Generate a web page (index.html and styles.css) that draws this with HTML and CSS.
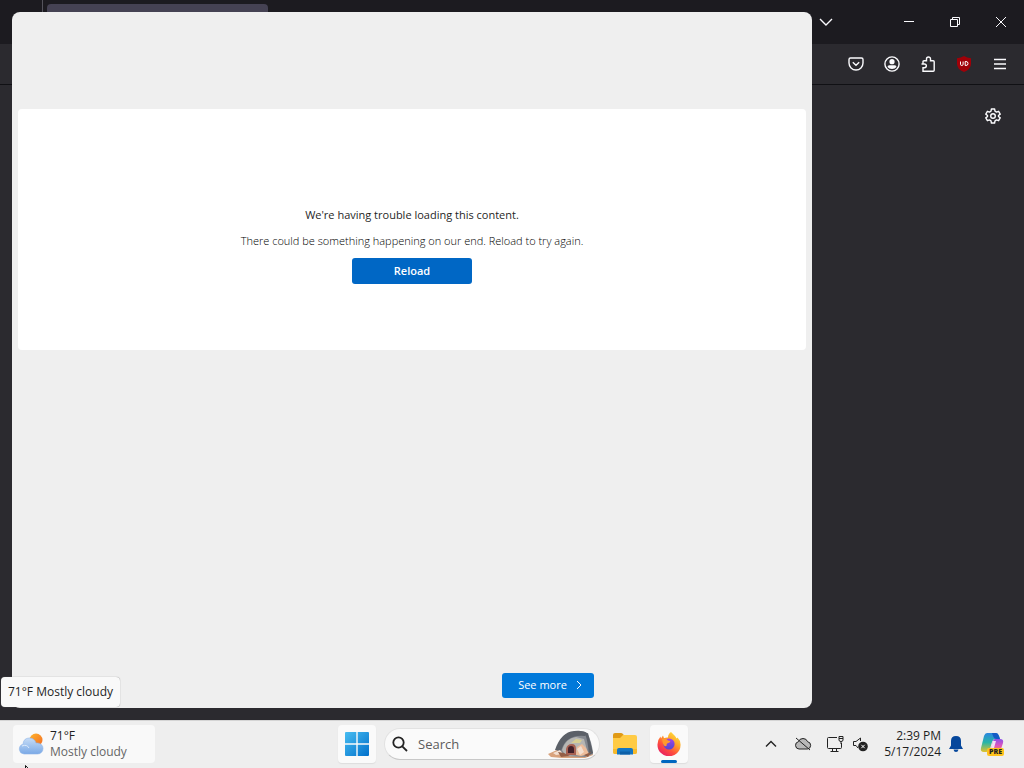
FILE: index.html
```html
<!DOCTYPE html>
<html lang="en">
<head>
    <meta charset="UTF-8">
    <meta name="viewport" content="width=device-width, initial-scale=1.0">
    <title>Desktop</title>
    <link rel="stylesheet" href="styles.css">
</head>
<body>
    <div class="desktop">
        <!-- Browser window -->
        <section class="browser">
            <header class="tab-strip">
                <div class="pinned"></div>
                <div class="tab"></div>
                <div class="window-controls">
                    <button class="list-tabs" aria-label="List all tabs">
                        <svg width="16" height="16" viewBox="0 0 16 16"><path class="thick" d="M2 5l6 6 6-6"/></svg>
                    </button>
                    <button aria-label="Minimize">
                        <svg width="12" height="12" viewBox="0 0 12 12"><path d="M1 5.5h10"/></svg>
                    </button>
                    <button aria-label="Restore">
                        <svg width="12" height="12" viewBox="0 0 12 12"><path d="M1.500 3.500h7v7h-7zM3.500 3V1.500h7v7H9"/></svg>
                    </button>
                    <button aria-label="Close">
                        <svg width="12" height="12" viewBox="0 0 12 12"><path d="M1 1l10 10M11 1L1 11"/></svg>
                    </button>
                </div>
            </header>
            <nav class="toolbar">
                <button aria-label="Save to Pocket">
                    <svg width="16" height="16" viewBox="0 0 16 16"><path class="thick" d="M2.500 2h11q1.500 0 1.500 1.500V7a7 7 0 0 1-14 0V3.500Q1 2 2.500 2zM4.800 6.200L8 9.200l3.200-3"/></svg>
                </button>
                <button aria-label="Account">
                    <svg width="16" height="16" viewBox="0 0 16 16"><circle class="thick" cx="8" cy="8" r="7.100"/><circle class="solid" cx="8" cy="5.700" r="2.600"/><path class="solid" d="M3.500 11q0-1.800 1.800-1.800h5.400q1.800 0 1.800 1.800Q11 13 8 13t-4.500-2z"/></svg>
                </button>
                <button aria-label="Extensions">
                    <svg width="16" height="16" viewBox="0 0 16 16"><path class="thick" d="M3 15.200h10.200q1 0 1-1V5.800q0-1-1-1h-2.700V3a2 2 0 0 0-4 0v1.800H4q-1 0-1 1V8h1.500a1.800 1.800 0 0 1 0 3.700H3zM3 8H1.500"/></svg>
                </button>
                <button aria-label="uBlock Origin">
                    <svg width="16" height="16" viewBox="0 0 16 16"><path fill="#a00008" stroke="none" d="M8 0q3 2 7 2.200V8q0 5-7 8-7-3-7-8V2.200Q5 2 8 0z"/><path stroke="#fff" d="M4.500 5.500v2.800q0 1.200 1.300 1.200t1.300-1.200V5.500M9.200 5.500v4h.8q2 0 2-2t-2-2z"/></svg>
                </button>
                <button aria-label="Menu">
                    <svg width="16" height="16" viewBox="0 0 16 16"><path class="thick" d="M2 3.500h12M2 8h12M2 12.500h12"/></svg>
                </button>
            </nav>
            <main class="new-tab">
                <button aria-label="Personalize new tab">
                    <svg width="16" height="16" viewBox="0 0 16 16"><path class="thick" stroke-linejoin="round" d="M6.400 1h3.200l.4 2.200 1.500.9 2.100-.8 1.600 2.800L13.500 7.500v1l1.700 1.400-1.600 2.800-2.100-.8-1.500.9L9.600 15H6.400L6 12.800l-1.500-.9-2.100.8L.8 9.900l1.700-1.400v-1L.8 6.100l1.600-2.800 2.100.8L6 3.200z"/><circle class="thick" cx="8" cy="8" r="2.300"/></svg>
                </button>
            </main>
        </section>

        <!-- Widgets board -->
        <section class="widgets">
            <div class="error-card">
                <h1>We're having trouble loading this content.</h1>
                <p>There could be something happening on our end. Reload to try again.</p>
                <button class="reload">Reload</button>
            </div>
            <div class="widgets-footer">
                <button class="see-more">See more
                    <svg width="8" height="10" viewBox="0 0 8 10"><path d="M2 1l4 4-4 4"/></svg>
                </button>
            </div>
        </section>

        <div class="tooltip" role="tooltip">71°F Mostly cloudy</div>

        <!-- Taskbar -->
        <footer class="taskbar">
            <button class="weather">
                <svg width="26" height="24" viewBox="0 0 26 24">
                    <defs>
                        <linearGradient id="cloud" x1="0" y1="0" x2="0" y2="1"><stop offset="0" stop-color="#c6dcf6"/><stop offset="1" stop-color="#7aa9e6"/></linearGradient>
                        <linearGradient id="sun" x1="0" y1="0" x2="1" y2="1"><stop offset="0" stop-color="#ffb52b"/><stop offset="1" stop-color="#f26a24"/></linearGradient>
                    </defs>
                    <circle cx="18" cy="8" r="6.500" fill="url(#sun)"/>
                    <path fill="url(#cloud)" stroke="#8db4e8" stroke-width=".6" d="M6 22a5 5 0 0 1-1-9.800Q5.500 6 11.500 6q5 0 6.500 5h1.500a5.300 5.300 0 0 1 0 11z"/>
                    <path fill="none" stroke="#dceafb" d="M4 14q5-2 7 2"/>
                </svg>
                <span class="weather-text">71°F<span>Mostly cloudy</span></span>
            </button>

            <div class="apps">
                <button class="app active" aria-label="Start">
                    <svg width="24" height="24" viewBox="0 0 24 24">
                        <defs><linearGradient id="win" x1="0" y1="0" x2="1" y2="1"><stop offset="0" stop-color="#48bdf1"/><stop offset="1" stop-color="#0070cb"/></linearGradient></defs>
                        <path fill="url(#win)" d="M0 1q0-1 1-1h10.300v11.300H0zM12.700 0H23q1 0 1 1v10.300H12.700zM0 12.700h11.300V24H1q-1 0-1-1zM12.700 12.700H24V23q0 1-1 1H12.700z"/>
                    </svg>
                </button>
                <div class="search">
                    <svg class="glass" width="16" height="16" viewBox="0 0 16 16"><circle cx="6.500" cy="6.500" r="5.200"/><path d="M10.300 10.300L15 15"/></svg>
                    <input type="text" placeholder="Search" aria-label="Search">
                    <svg class="cave" width="46" height="28" viewBox="0 0 46 28">
                        <path fill="#d8a27c" d="M0 24l9-4 6-7 8 11 21-2 1 3-8 3H14L3 27z"/>
                        <path fill="#858990" d="M9 20Q13 3 25 2q8-1 14 1 5 8 6 21l-8 3-21-1z"/>
                        <path fill="#5b6068" d="M7 20Q13 2 26 1q9-1 13 2l-2 3Q18 4 13 21zM37 4l3-1 5 20-4 2Q40 11 37 4z"/>
                        <path fill="#b6b6b3" d="M14 20Q18 8 28 7l8 2 4 15-22 2z"/>
                        <path fill="#d8cf93" d="M23 13l5-4 6 1-2 3z"/>
                        <path fill="#a86152" d="M18 25v-6q1-5 6-5 4 0 4 5v6z"/>
                        <path fill="#43212a" d="M20 23v-4q0-3 3-3t3 3v4z"/>
                        <path fill="#edbd9b" d="M29 17l5-3 4 4 3 6-8 2-5-1z"/>
                        <path fill="#f3dfd0" d="M29 19l4-3 3 6-4 3zM5 23l7-3 3 4-7 1z"/>
                        <path fill="#935f47" d="M10 22l6 1 6 3-9 1zM36 25l7-3-3 5z"/>
                    </svg>
                </div>
                <button class="app explorer" aria-label="File Explorer">
                    <svg width="26" height="24" viewBox="0 0 26 24">
                        <path fill="#e09a16" d="M1 3q0-2 2-2h6q1 0 2 1l2 3v5H1z"/>
                        <path fill="#ffcb45" d="M1 6h7l3-3h12q2 0 2 2v15q0 2-2 2H3q-2 0-2-2z"/>
                        <path fill="#f6b92c" d="M1 17h24v3q0 2-2 2H3q-2 0-2-2z"/>
                        <path fill="#1476c4" d="M5 22.500V18q0-2 2-2h12q2 0 2 2v4.500z"/>
                        <path fill="#0c60a8" d="M8 19.500h10v3H8z"/>
                    </svg>
                </button>
                <button class="app active firefox" aria-label="Firefox">
                    <svg width="24" height="24" viewBox="0 0 24 24">
                        <defs>
                            <linearGradient id="fox" x1=".85" y1=".05" x2=".2" y2="1"><stop offset="0" stop-color="#ffe33c"/><stop offset=".35" stop-color="#ffa32a"/><stop offset=".65" stop-color="#ff503c"/><stop offset="1" stop-color="#e51868"/></linearGradient>
                            <linearGradient id="globe" x1="0" y1="0" x2="0" y2="1"><stop offset="0" stop-color="#a542e8"/><stop offset="1" stop-color="#5048ce"/></linearGradient>
                        </defs>
                        <path fill="url(#fox)" d="M14 0q2 2 4 4 1 1 1.500 2.500l1-1Q24 9 23.500 13.500A11.500 11 0 0 1 .5 13Q.3 8 3.500 4.500l.5 2 2-3 1 2.700q2-1 4-.7Q11 2 14 0z"/>
                        <circle cx="12" cy="12" r="5.600" fill="url(#globe)"/>
                        <path fill="#ff9a2c" d="M5 7q4-1.500 6 1.500l2.500.5q-.5 1.800-3 2.200-1.300.8-.8 2.300Q8.500 15 7 13.500 5.500 11 5 7z"/>
                    </svg>
                </button>
            </div>

            <div class="tray">
                <button class="chevron" aria-label="Show hidden icons">
                    <svg width="12" height="12" viewBox="0 0 12 12"><path d="M1 8.500l5-5 5 5"/></svg>
                </button>
                <button class="cloud" aria-label="OneDrive">
                    <svg width="18" height="16" viewBox="0 0 18 16"><path fill="#b8b8b8" d="M5 13a3.700 3.700 0 0 1-.6-7.300Q5.500 2.500 9 2.500t4.600 3.200A3.700 3.700 0 0 1 13.500 13z"/><path d="M2 2l14 12"/></svg>
                </button>
                <button class="network" aria-label="Network and volume">
                    <svg width="18" height="18" viewBox="0 0 18 18"><path d="M11 2.500H2.500q-1 0-1 1v9q0 1 1 1h12q1 0 1-1V8M6.500 13.500v3M10.500 13.500v3M4.500 16.500h8M13 1.500h4V5q0 1.500-2 1.500T13 5zM13 3.500h4M15 6.500V9"/></svg>
                    <svg width="16" height="16" viewBox="0 0 16 16"><path d="M6 12L4 9.500H1.500v-4H4L8.500 2v3"/><circle cx="11" cy="10.500" r="4.800" fill="#222" stroke="none"/><path stroke="#fff" d="M9.300 8.800l3.400 3.400M12.700 8.800l-3.400 3.400"/></svg>
                </button>
                <button class="clock">2:39 PM<br>5/17/2024</button>
                <button class="bell" aria-label="Notifications">
                    <svg width="14" height="16" viewBox="0 0 14 16"><path fill="#06479c" stroke="none" d="M7 0q5 0 5 5v4.500L14 13H0l2-3.500V5Q2 0 7 0zM4.500 13.500h5Q9 16 7 16t-2.500-2.500z"/></svg>
                </button>
                <button class="copilot" aria-label="Copilot">
                    <svg width="24" height="24" viewBox="0 0 24 24">
                        <defs>
                            <linearGradient id="co1" x1="0" y1="0" x2="0" y2="1"><stop offset="0" stop-color="#2a86e0"/><stop offset=".5" stop-color="#28b5a7"/><stop offset="1" stop-color="#e3c32b"/></linearGradient>
                            <linearGradient id="co2" x1="0" y1="0" x2="0" y2="1"><stop offset="0" stop-color="#8c51e9"/><stop offset=".5" stop-color="#dc55bd"/><stop offset="1" stop-color="#fb8853"/></linearGradient>
                        </defs>
                        <path fill="url(#co1)" stroke="none" d="M7 1h9q2 0 3 3l1 3h-5q-2 0-3 3l-2 7q-1 3-4 3H4q-4 0-3-4L4 4q1-3 3-3z"/>
                        <path fill="url(#co2)" stroke="none" d="M15 7h5q4 0 3 4l-3 9H8q2 0 3-3l2-8q.5-2 2-2z"/>
                        <path fill="#135bc5" stroke="none" d="M12 1h4q2 0 3 3l1 3h-4q-2 0-3-3z"/>
                        <path fill="#f4dff4" stroke="none" d="M13 9h3l-2 7h-3z"/>
                    </svg>
                    <span class="badge">PRE</span>
                </button>
            </div>
        </footer>

        <svg class="cursor" width="12" height="18" viewBox="0 0 12 18"><path fill="#fff" stroke="#111" d="M.5.5v13l3-3 2 5 2-1-2-4.500h4z"/></svg>
    </div>
</body>
</html>
```
FILE: styles.css
```css
* {
    box-sizing: border-box;
}

body {
    margin: 0;
    font-family: "Open Sans", "Noto Sans", sans-serif;
    font-size: 12px;
    line-height: 16px;
    color: #1f1f1f;
}

button {
    display: flex;
    align-items: center;
    justify-content: center;
    flex-shrink: 0;
    padding: 0;
    border: 0;
    background: none;
    color: inherit;
    font: inherit;
}

.desktop {
    position: relative;
    display: flex;
    flex-direction: column;
    height: 100vh;
    overflow: hidden;
}

/* Browser */
.browser {
    flex: 1;
    display: flex;
    flex-direction: column;
    background-color: #2b2a2f;
}

.browser svg,
.see-more svg {
    fill: none;
    stroke: #fbfbfe;
}

.browser .thick {
    stroke-width: 1.4;
}

.browser .solid {
    fill: #fbfbfe;
    stroke: none;
}

.tab-strip {
    display: flex;
    height: 44px;
    background-color: #1c1b20;
}

.pinned {
    width: 43px;
    height: 12px;
    border-right: 1px solid #55545c;
}

.tab {
    width: 221px;
    margin: 4px 0 4px 4px;
    border-radius: 4px;
    background-color: #454253;
}

.window-controls {
    display: flex;
    margin-left: auto;
}

.window-controls button {
    width: 46px;
}

.window-controls .list-tabs {
    width: 40px;
    margin-right: 40px;
}

.toolbar {
    display: flex;
    justify-content: flex-end;
    height: 41px;
    padding-right: 6px;
    background-color: #2b2a2f;
    border-bottom: 1px solid #101014;
}

.toolbar button {
    width: 36px;
}

.new-tab {
    display: flex;
    justify-content: flex-end;
    padding: 15px 15px 0 0;
}

.new-tab button {
    width: 32px;
    height: 32px;
}

/* Widgets board */
.widgets {
    position: absolute;
    top: 12px;
    bottom: 60px;
    left: 12px;
    display: flex;
    flex-direction: column;
    justify-content: space-between;
    width: 800px;
    max-width: calc(100% - 24px);
    padding: 97px 6px 10px;
    border-radius: 8px;
    background-color: #efefef;
}

.error-card {
    display: flex;
    flex-direction: column;
    align-items: center;
    padding: 98px 16px 66px;
    border-radius: 4px;
    background-color: #fff;
    text-align: center;
}

.error-card h1 {
    margin: 0 0 10px;
    font-size: 11px;
    font-weight: 500;
    line-height: 16px;
}

.error-card p {
    margin: 0 0 9px;
    color: #000;
    font-size: 11px;
    font-weight: 300;
}

.reload {
    width: 120px;
    height: 26px;
    border-radius: 3px;
    background-color: #0067c5;
    color: #fff;
    font-size: 11px;
    font-weight: 600;
}

.widgets-footer {
    display: flex;
    justify-content: center;
    padding-left: 272px;
}

.see-more {
    gap: 8px;
    width: 92px;
    height: 25px;
    padding: 0 0 1px 5px;
    border-radius: 3px;
    background-color: #0079da;
    color: #fff;
    font-size: 11px;
}

.tooltip {
    position: absolute;
    left: 1px;
    bottom: 61px;
    padding: 7px;
    border-radius: 4px;
    background-color: #f9f9f9;
    box-shadow: 0 0 1px #777;
}

/* Taskbar */
.taskbar {
    display: grid;
    grid-template-columns: 1fr auto 1fr;
    align-items: center;
    height: 48px;
    padding-bottom: 1px;
    border-top: 1px solid #d4d4d4;
    background-color: #eeeeee;
}

.weather {
    justify-content: flex-start;
    gap: 6px;
    width: 142px;
    height: 38px;
    margin-left: 13px;
    padding-left: 5px;
    border-radius: 4px;
    background-color: #f9f9f9;
    text-align: left;
}

.weather-text span {
    display: block;
    color: #666;
}

.apps {
    display: flex;
    align-items: center;
    padding-left: 2px;
}

.app {
    position: relative;
    width: 38px;
    height: 38px;
    border-radius: 4px;
}

.app.active {
    background-color: #fafafa;
    box-shadow: 0 1px 1px #ddd;
}

.explorer {
    margin: 0 6px;
}

.firefox::after {
    content: "";
    position: absolute;
    bottom: 0;
    left: 11px;
    width: 16px;
    height: 3px;
    border-radius: 2px;
    background-color: #0067c0;
}

.search {
    display: flex;
    align-items: center;
    width: 216px;
    height: 32px;
    margin-left: 8px;
    padding: 0 5px 0 7px;
    border: 1px solid #e2e2e2;
    border-bottom-color: #c8c8c8;
    border-radius: 16px;
    background-color: #fafafa;
}

.glass {
    flex-shrink: 0;
    fill: none;
    stroke: #222;
    stroke-width: 1.8;
}

.search input {
    flex: 1;
    min-width: 0;
    padding: 0 0 0 10px;
    border: 0;
    outline: 0;
    background: none;
    font: inherit;
    font-size: 13px;
}

.search input::placeholder {
    color: #5c5c5c;
    opacity: 1;
}

.tray {
    display: flex;
    align-items: center;
    justify-content: flex-end;
    padding-right: 20px;
}

.tray svg {
    fill: none;
    stroke: #222;
}

.chevron svg {
    stroke-width: 1.4;
}

.chevron,
.cloud {
    width: 32px;
}

.network {
    gap: 8px;
    padding: 0 7px;
}

.clock {
    margin-left: 9px;
    text-align: right;
}

.bell {
    width: 30px;
}

.copilot {
    position: relative;
    margin-left: 9px;
}

.badge {
    position: absolute;
    right: 0;
    bottom: 0;
    padding: 0 2px;
    border-radius: 2px;
    background-color: #ffc21c;
    color: #222;
    font-size: 7px;
    font-weight: 800;
    line-height: 8px;
}

.cursor {
    position: absolute;
    left: 25px;
    bottom: -15px;
}
```
